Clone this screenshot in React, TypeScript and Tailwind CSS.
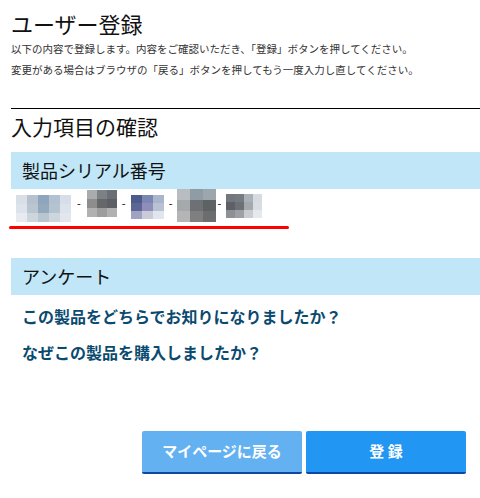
import React from "react";

// ─── モザイク（シリアル番号の伏せ字） ─────────────────────────────────────────

type Mosaic = { cols: number; cell: string; mt: string; colors: string[] };

const blocks: Mosaic[] = [
  {
    cols: 5,
    cell: "w-[11px] h-[9px]",
    mt: "mt-[6px]",
    colors: [
      "#d9dfe7", "#b5c1cf", "#8fa5bd", "#b1c1d1", "#d7dee7",
      "#dde3eb", "#b9c5d1", "#95a9bd", "#b5c3d1", "#dde3eb",
      "#e7ebf1", "#cdd5dd", "#b9c5cf", "#cdd5dd", "#e3e7ed",
    ],
  },
  {
    cols: 3,
    cell: "w-[10px] h-[9px]",
    mt: "mt-[1px]",
    colors: [
      "#a9abad", "#7d8185", "#6b6f75",
      "#8d8d8d", "#656769", "#5d5f67",
      "#b1b1af", "#9d9d9d", "#b1b1b1",
    ],
  },
  {
    cols: 3,
    cell: "w-[11px] h-[8px]",
    mt: "mt-[6px]",
    colors: [
      "#4b5b8b", "#7b87b1", "#a9b5cd",
      "#5d6595", "#8f8db9", "#b9c1d5",
      "#a1a1c1", "#c9cbd9", "#e1e5ed",
    ],
  },
  {
    cols: 3,
    cell: "w-[13px] h-[11px]",
    mt: "mt-0",
    colors: [
      "#b9bdc1", "#8f9ba5", "#9da5ad",
      "#a5a9ab", "#6d7175", "#5d6365",
      "#b5b5b5", "#7f7f7f", "#6b6d6f",
    ],
  },
  {
    cols: 4,
    cell: "w-[9px] h-[8px]",
    mt: "mt-[5px]",
    colors: [
      "#71777d", "#757b81", "#a9b1b9", "#d5dbe1",
      "#5d6167", "#6d7177", "#a5a9ad", "#d9dde1",
      "#8d9195", "#9da1a5", "#c9cdd1", "#e5e9ed",
    ],
  },
];

function MosaicBlock({ m }: { m: Mosaic }) {
  return (
    <div
      className={`grid ${m.mt} ${m.cols === 5 ? "grid-cols-5" : m.cols === 4 ? "grid-cols-4" : "grid-cols-3"}`}
    >
      {m.colors.map((c, i) => (
        <div key={i} className={m.cell} style={{ backgroundColor: c }} />
      ))}
    </div>
  );
}

// ─── 見出し帯 ─────────────────────────────────────────────────────────────────

function Band({ children, className = "" }: { children: React.ReactNode; className?: string }) {
  return (
    <div className={`h-[37px] bg-[#c0e6f8] pl-[11px] flex items-center text-[18px] text-[#111] ${className}`}>
      {children}
    </div>
  );
}

export default function App() {
  return (
    <div
      className="w-[480px] h-[498px] bg-white pl-[11px] overflow-hidden"
      style={{ fontFamily: '"Noto Sans CJK JP", "Noto Sans", sans-serif' }}
    >
      <h1 className="mt-[8px] text-[22px] leading-[30px] font-normal text-[#111]">ユーザー登録</h1>
      <p className="text-[10.5px] leading-[21px] text-[#333]">
        以下の内容で登録します。内容をご確認いただき、「登録」ボタンを押してください。
        <br />
        変更がある場合はブラウザの「戻る」ボタンを押してもう一度入力し直してください。
      </p>

      <div className="mt-[28px] h-px bg-black" />

      <h2 className="text-[21px] leading-[34px] font-normal text-[#111]">入力項目の確認</h2>

      <Band className="mt-[9px]">製品シリアル番号</Band>

      <div className="h-[33px] flex items-start pl-[5px] text-[11px] text-black">
        <MosaicBlock m={blocks[0]} />
        <span className="mx-[6px] mt-[9px] leading-none">-</span>
        <MosaicBlock m={blocks[1]} />
        <span className="mx-[5px] mt-[9px] leading-none">-</span>
        <MosaicBlock m={blocks[2]} />
        <span className="mx-[5px] mt-[9px] leading-none">-</span>
        <MosaicBlock m={blocks[3]} />
        <span className="ml-[1px] mr-[5px] mt-[9px] leading-none">-</span>
        <MosaicBlock m={blocks[4]} />
      </div>
      <div className="-ml-[2px] mt-[4px] w-[280px] h-[3px] rounded-full bg-[#ff0000]" />

      <Band className="mt-[29px]">アンケート</Band>

      <div className="pl-[11px] text-[16px] font-bold text-[#0b4a6f]">
        <p className="mt-[3px] leading-[36px]">この製品をどちらでお知りになりましたか？</p>
        <p className="leading-[36px]">なぜこの製品を購入しましたか？</p>
      </div>

      <div className="mt-[61px] flex justify-end gap-[4px] pr-[14px]">
        <button className="w-[160px] h-[43px] rounded-[2px] bg-[#64b1f2] border-b-2 border-[#0d47a1] text-white text-[15px] font-bold">
          マイページに戻る
        </button>
        <button className="w-[160px] h-[43px] rounded-[2px] bg-[#2196f3] border-b-2 border-[#0d47a1] text-white text-[15px] font-bold">
          登 録
        </button>
      </div>
    </div>
  );
}
